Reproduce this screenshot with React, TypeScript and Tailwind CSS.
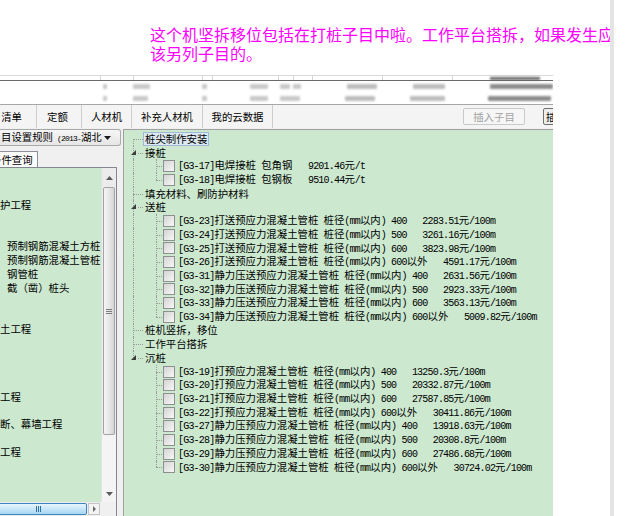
import React from "react";

type TreeRow =
  | { k: "leaf"; t: string; sel?: boolean }
  | { k: "group"; t: string }
  | { k: "item"; t: string; last?: boolean };

const rightRows: TreeRow[] = [
  { k: "leaf", t: "桩尖制作安装", sel: true },
  { k: "group", t: "接桩" },
  { k: "item", t: "[G3-17]电焊接桩 包角钢   9201.46元/t" },
  { k: "item", t: "[G3-18]电焊接桩 包钢板   9510.44元/t", last: true },
  { k: "leaf", t: "填充材料、刷防护材料" },
  { k: "group", t: "送桩" },
  { k: "item", t: "[G3-23]打送预应力混凝土管桩 桩径(mm以内) 400   2283.51元/100m" },
  { k: "item", t: "[G3-24]打送预应力混凝土管桩 桩径(mm以内) 500   3261.16元/100m" },
  { k: "item", t: "[G3-25]打送预应力混凝土管桩 桩径(mm以内) 600   3823.98元/100m" },
  { k: "item", t: "[G3-26]打送预应力混凝土管桩 桩径(mm以内) 600以外   4591.17元/100m" },
  { k: "item", t: "[G3-31]静力压送预应力混凝土管桩 桩径(mm以内) 400   2631.56元/100m" },
  { k: "item", t: "[G3-32]静力压送预应力混凝土管桩 桩径(mm以内) 500   2923.33元/100m" },
  { k: "item", t: "[G3-33]静力压送预应力混凝土管桩 桩径(mm以内) 600   3563.13元/100m" },
  { k: "item", t: "[G3-34]静力压送预应力混凝土管桩 桩径(mm以内) 600以外   5009.82元/100m", last: true },
  { k: "leaf", t: "桩机竖拆，移位" },
  { k: "leaf", t: "工作平台搭拆" },
  { k: "group", t: "沉桩" },
  { k: "item", t: "[G3-19]打预应力混凝土管桩 桩径(mm以内) 400   13250.3元/100m" },
  { k: "item", t: "[G3-20]打预应力混凝土管桩 桩径(mm以内) 500   20332.87元/100m" },
  { k: "item", t: "[G3-21]打预应力混凝土管桩 桩径(mm以内) 600   27587.85元/100m" },
  { k: "item", t: "[G3-22]打预应力混凝土管桩 桩径(mm以内) 600以外   30411.86元/100m" },
  { k: "item", t: "[G3-27]静力压预应力混凝土管桩 桩径(mm以内) 400   13918.63元/100m" },
  { k: "item", t: "[G3-28]静力压预应力混凝土管桩 桩径(mm以内) 500   20308.8元/100m" },
  { k: "item", t: "[G3-29]静力压预应力混凝土管桩 桩径(mm以内) 600   27486.68元/100m" },
  { k: "item", t: "[G3-30]静力压预应力混凝土管桩 桩径(mm以内) 600以外   30724.02元/100m", last: true },
];

// left tree is scrolled sideways, so the names are cut off
const leftRows: [string, string][] = [
  ["", ""], ["", ""], ["护工程", ""], ["", ""], ["", ""],
  ["预制钢筋混凝土方桩", "pl-[7px]"], ["预制钢筋混凝土管桩", "pl-[7px]"], ["钢管桩", "pl-[7px]"], ["截（凿）桩头", "pl-[7px]"],
  ["", ""], ["", ""], ["土工程", ""], ["", ""], ["", ""], ["", ""], ["", ""],
  ["工程", ""], ["", ""], ["断、幕墙工程", ""], ["", ""], ["工程", ""],
];

// ascii runs get the narrow half-width look
function Mixed({ t }: { t: string }) {
  const parts = t.split(/([\x20-\x7e]+)/);
  return (
    <>
      {parts.map((s, i) =>
        i % 2 === 1 ? (
          <span key={i} className="font-['Liberation_Mono',monospace] text-[10px] tracking-[-0.8px]">
            {s}
          </span>
        ) : (
          <React.Fragment key={i}>{s}</React.Fragment>
        )
      )}
    </>
  );
}

const vline = "absolute w-0 border-l border-dotted border-[#9a9a9a]";
const hline = "absolute top-1/2 h-0 border-t border-dotted border-[#9a9a9a]";

function RightTree() {
  const lastRoot = rightRows.findIndex((r) => r.k === "group" && r.t === "沉桩");
  return (
    <div className="pt-[2px]">
      {rightRows.map((r, i) => {
        const cont = i < lastRoot;
        if (r.k === "item") {
          return (
            <div key={i} className="flex h-[13.7px] items-center whitespace-pre leading-[13.7px]">
              <div className="relative flex h-full w-[54px] shrink-0 items-center justify-end pr-[3px]">
                {cont && <div className={`${vline} left-[9px] top-0 bottom-0`} />}
                <div className={`${vline} left-[32px] top-0 ${r.last ? "h-1/2" : "bottom-0"}`} />
                <div className={`${hline} left-[32px] w-[6px]`} />
                <div className="h-[12px] w-[12px] border border-[#8e8f8f] bg-linear-to-br from-[#d4d4d4] to-[#f7f7f7]" />
              </div>
              <span>
                <Mixed t={r.t} />
              </span>
            </div>
          );
        }
        return (
          <div key={i} className="flex h-[13.7px] items-stretch whitespace-pre leading-[12px]">
            <div className="relative w-[19px] shrink-0">
              <div
                className={`${vline} left-[9px] ${i === 0 ? "top-1/2 bottom-0" : cont ? "top-0 bottom-0" : "top-0 h-1/2"}`}
              />
              {r.k === "leaf" ? (
                <div className={`${hline} left-[9px] w-[10px]`} />
              ) : (
                <>
                  <svg className="absolute left-[7px] top-[4px]" width="5" height="5" viewBox="0 0 5 5">
                    <polygon points="5,0 5,5 0,5" fill="#3c3c3c" />
                  </svg>
                  <div className={`${hline} left-[14px] w-[5px]`} />
                </>
              )}
            </div>
            <span
              className={`flex items-center border px-[1px] ${
                r.k === "leaf" && r.sel ? "border-[#9fb8d6] bg-[#dde9f2]" : "border-transparent"
              }`}
            >
              {r.t}
            </span>
          </div>
        );
      })}
    </div>
  );
}

function VScroll() {
  return (
    <div className="flex w-[15px] shrink-0 flex-col border-l border-[#e2e2e2] bg-[#ececec]">
      <div className="flex h-[19px] shrink-0 items-center justify-center">
        <svg width="7" height="4" viewBox="0 0 7 4">
          <polygon points="3.5,0 7,4 0,4" fill="#5a5a5a" />
        </svg>
      </div>
      <div className="mx-[1px] flex h-[248px] shrink-0 items-center justify-center rounded-[2px] border border-[#a3a3a3] bg-linear-to-r from-[#f4f4f4] via-[#e7e7e7] to-[#d5d5d5]">
        <div className="flex flex-col gap-[1px]">
          <div className="h-px w-[6px] bg-[#7c7c7c]" />
          <div className="h-px w-[6px] bg-[#7c7c7c]" />
          <div className="h-px w-[6px] bg-[#7c7c7c]" />
        </div>
      </div>
      <div className="flex-1 bg-[#f4f4f4]" />
      <div className="flex h-[16px] shrink-0 items-center justify-center bg-[#f4f4f4]">
        <svg width="7" height="4" viewBox="0 0 7 4">
          <polygon points="0,0 7,0 3.5,4" fill="#5a5a5a" />
        </svg>
      </div>
    </div>
  );
}

function HScroll() {
  return (
    <div className="flex h-[14px] shrink-0 bg-[#ececec]">
      <div className="my-[1px] -ml-[10px] flex w-[97px] shrink-0 items-center justify-center rounded-[2px] border border-[#3f85bd] bg-linear-to-b from-[#e6f5fd] to-[#a8d7f3]">
        <div className="flex gap-[1px]">
          <div className="h-[6px] w-px bg-[#2f6f9f]" />
          <div className="h-[6px] w-px bg-[#2f6f9f]" />
          <div className="h-[6px] w-px bg-[#2f6f9f]" />
        </div>
      </div>
      <div className="my-[1px] ml-[1px] flex w-[12px] shrink-0 items-center justify-center border border-[#c6c6c6] bg-[#f3f3f3]">
        <svg width="3" height="6" viewBox="0 0 3 6">
          <polygon points="0,0 3,3 0,6" fill="#6a6a6a" />
        </svg>
      </div>
      <div className="flex-1 bg-[#f0f0f0]" />
    </div>
  );
}

function LeftPanel() {
  return (
    <div className="flex w-[121px] shrink-0 flex-col">
      <div className="flex h-[17px] shrink-0 items-center rounded-r-[3px] border border-l-0 border-[#a9a9a9] bg-linear-to-b from-[#f6f6f6] to-[#e6e6e6] text-[10.4px] leading-[12px]">
        <span className="flex-1 overflow-hidden whitespace-nowrap pl-[1px]">
          目设置规则
          <span className="font-['Liberation_Mono',monospace] text-[8px] tracking-[-0.8px]"> (2013-</span>
          湖北
        </span>
        <svg className="mr-[9px] shrink-0" width="7" height="4" viewBox="0 0 7 4">
          <polygon points="0,0 7,0 3.5,4" fill="#1a1a1a" />
        </svg>
      </div>
      <div className="mt-[5px] flex h-[16px] w-[38px] shrink-0 items-center overflow-hidden whitespace-nowrap border-t border-r border-[#8d9099] bg-[#fbfbfb] text-[10.4px] leading-[12px]">
        <span className="-ml-[9px]">条件查询</span>
      </div>
      <div className="flex min-h-0 w-[117px] flex-1 flex-col border-t border-r border-[#828790] bg-[#cce8cf]">
        <div className="flex min-h-0 flex-1">
          <div className="min-w-0 flex-1 overflow-hidden pt-[3px] text-[10.4px]">
            {leftRows.map(([t, cls], i) => (
              <div key={i} className={`h-[13.7px] whitespace-nowrap leading-[13.7px] ${cls}`}>
                {t}
              </div>
            ))}
          </div>
          <VScroll />
        </div>
        <HScroll />
      </div>
    </div>
  );
}

function GridTop() {
  const sep = "h-full shrink-0 border-r border-[#d6d6d6]";
  const smudge = "h-[5px] shrink-0 rounded-[1px] blur-[1.3px]";
  return (
    <>
      <div className="flex h-[6px] shrink-0 border-t border-b border-t-[#dadada] border-b-[#6a6a6a] bg-white">
        <div className={`${sep} w-[101px]`} />
        <div className={`${sep} w-[33px]`} />
        <div className={`${sep} w-[69px]`} />
        <div className={`${sep} w-[10px]`} />
        <div className={`${sep} w-[66px]`} />
        <div className={`${sep} w-[15px]`} />
        <div className={`${sep} w-[19px]`} />
        <div className={`${sep} w-[70px]`} />
        <div className={`${sep} w-[70px]`} />
        <div className="ml-[37px] mt-[1px] h-[3px] w-[50px] bg-[#666] blur-[0.8px]" />
      </div>
      <div className="flex h-[23px] shrink-0 flex-col bg-white">
        <div className="flex h-[11px] items-center">
          <div className={`${smudge} ml-[103px] w-[4px] bg-[#c9c9c9]`} />
          <div className={`${smudge} ml-[26px] w-[17px] bg-[#c9c9c9]`} />
          <div className={`${smudge} ml-[52px] w-[5px] bg-[#c9c9c9]`} />
          <div className={`${smudge} ml-[43px] w-[18px] bg-[#c9c9c9]`} />
          <div className={`${smudge} ml-[12px] w-[10px] bg-[#c9c9c9]`} />
          <div className={`${smudge} ml-[3px] w-[8px] bg-[#c9c9c9]`} />
          <div className={`${smudge} ml-[46px] w-[30px] bg-[#bdbdbd]`} />
          <div className={`${smudge} ml-[36px] w-[32px] bg-[#bdbdbd]`} />
          <div className={`${smudge} ml-[45px] w-[63px] bg-[#8c8c8c]`} />
        </div>
        <div className="flex h-[12px] items-center">
          <div className={`${smudge} ml-[103px] w-[4px] bg-[#c9c9c9]`} />
          <div className={`${smudge} ml-[26px] w-[15px] bg-[#c9c9c9]`} />
          <div className={`${smudge} ml-[54px] w-[5px] bg-[#c9c9c9]`} />
          <div className={`${smudge} ml-[43px] w-[18px] bg-[#c9c9c9]`} />
          <div className={`${smudge} ml-[12px] w-[20px] bg-[#c9c9c9]`} />
          <div className={`${smudge} ml-[45px] w-[30px] bg-[#bdbdbd]`} />
          <div className={`${smudge} ml-[35px] w-[35px] bg-[#bdbdbd]`} />
          <div className={`${smudge} ml-[43px] w-[63px] bg-[#8c8c8c]`} />
        </div>
      </div>
    </>
  );
}

function TabBar() {
  const tab = "flex h-full shrink-0 items-center border-r border-[#cdcdcd]";
  return (
    <div className="flex h-[24px] shrink-0 items-center border-t border-[#a6a6a6] bg-[#f4f4f4] text-[10.4px] leading-[12px]">
      <div className={`${tab} w-[37px] justify-end pr-[14px]`}>清单</div>
      <div className={`${tab} w-[45px] justify-center pr-[3px]`}>定额</div>
      <div className={`${tab} w-[50px] justify-center`}>人材机</div>
      <div className={`${tab} w-[71px] justify-center`}>补充人材机</div>
      <div className={`${tab} w-[70px] justify-center`}>我的云数据</div>
      <div className="ml-[190px] flex h-[17px] w-[62px] shrink-0 items-center justify-center rounded-[2px] border border-[#c9c9c9] bg-[#f6f6f6] text-[#a2a2a2]">
        插入子目
      </div>
      <div className="ml-[18px] flex h-[17px] w-[60px] shrink-0 items-center rounded-[2px] border border-[#707070] bg-[#eeeeee] pl-[2px]">
        插入
      </div>
    </div>
  );
}

function Window() {
  return (
    <div className="flex h-[441px] w-[553px] shrink-0 flex-col overflow-hidden bg-[#f0f0f0]">
      <GridTop />
      <TabBar />
      <div className="flex min-h-0 flex-1 pt-[1px]">
        <LeftPanel />
        <div className="w-[2px] shrink-0" />
        <div className="min-w-0 flex-1 overflow-hidden border-t border-l border-[#a0a0a0] bg-[#cce8cf] text-[10.4px]">
          <RightTree />
        </div>
      </div>
    </div>
  );
}

export default function App() {
  return (
    <div className="flex h-[516px] w-[625px] overflow-hidden bg-white font-['Noto_Sans_CJK_SC',sans-serif] text-black">
      <div className="flex w-[610px] shrink-0 flex-col">
        <div className="h-[75px] shrink-0 whitespace-nowrap pl-[150px] pt-[25px] text-[16px] leading-[19px] text-[#ff00ff]">
          这个机坚拆移位包括在打桩子目中啦。工作平台搭拆，如果发生应
          <br />
          该另列子目的。
        </div>
        <Window />
      </div>
      <div className="w-[4px] shrink-0 bg-[#e4e4e4]" />
    </div>
  );
}
